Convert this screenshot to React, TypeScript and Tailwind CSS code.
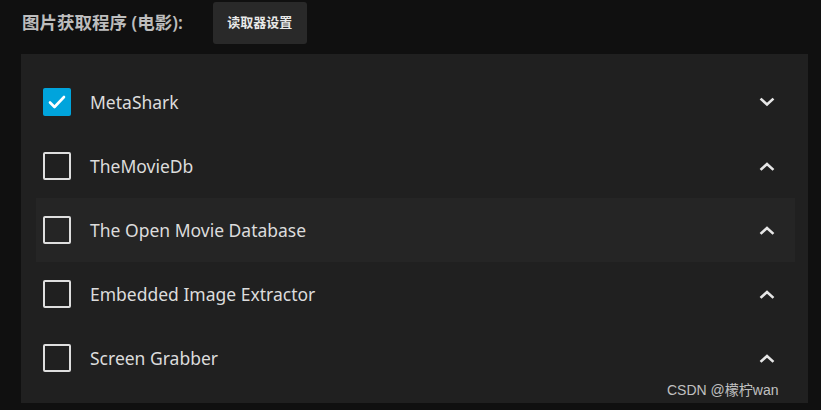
const fetchers = [
  { name: "MetaShark", checked: true, open: false },
  { name: "TheMovieDb", checked: false, open: true },
  { name: "The Open Movie Database", checked: false, open: true, hover: true },
  { name: "Embedded Image Extractor", checked: false, open: true },
  { name: "Screen Grabber", checked: false, open: true },
];

function Chevron({ up }: { up: boolean }) {
  return (
    <svg width="16" height="10" viewBox="0 0 16 10" fill="none" stroke="#e6e6e6" strokeWidth={2.6} strokeLinecap="square">
      {up ? <path d="M2.5 8 L8 3 L13.5 8" /> : <path d="M2.5 2.5 L8 7.5 L13.5 2.5" />}
    </svg>
  );
}

export default function App() {
  return (
    <div
      className="relative w-[821px] h-[410px] bg-[#101010] overflow-hidden"
      style={{ fontFamily: '"Noto Sans", "Noto Sans CJK SC", sans-serif' }}
    >
      <div className="flex items-center h-[44px] pl-[22px] pt-[1px]">
        <span className="text-[17.5px] text-[#bdbdbd] font-semibold">图片获取程序 (电影):</span>
        <button className="ml-[30px] w-[94px] h-[42px] rounded-[3px] bg-[#292929] text-[13px] font-bold text-[#e8e8e8]">
          读取器设置
        </button>
      </div>

      <div className="ml-[21px] mt-[10px] w-[787px] h-[349px] bg-[#202020] pt-[16px] pl-[15px] pr-[13px]">
        {fetchers.map((f) => (
          <div
            key={f.name}
            className={`flex items-center h-[64px] pl-[7px] pr-[20px] ${f.hover ? "bg-[#252525]" : ""}`}
          >
            {f.checked ? (
              <div className="w-[28px] h-[28px] rounded-[2px] bg-[#00a4dc] flex items-center justify-center">
                <svg width="18" height="14" viewBox="0 0 18 14" fill="none" stroke="#ffffff" strokeWidth={2.6} strokeLinecap="round" strokeLinejoin="round">
                  <path d="M2 7.5 L6.5 12 L16 2" />
                </svg>
              </div>
            ) : (
              <div className="w-[28px] h-[28px] rounded-[2px] border-2 border-[#dedede]" />
            )}
            <span className="ml-[19px] text-[17.5px] text-[#dcdcdc] flex-1">{f.name}</span>
            <Chevron up={f.open} />
          </div>
        ))}
      </div>

      <span
        className="absolute left-[667px] top-[380px] text-[14px] text-[#c0c0c0]"
        style={{ fontFamily: '"Liberation Sans", "Noto Sans CJK SC", sans-serif' }}
      >
        CSDN @檬柠wan
      </span>
    </div>
  );
}
